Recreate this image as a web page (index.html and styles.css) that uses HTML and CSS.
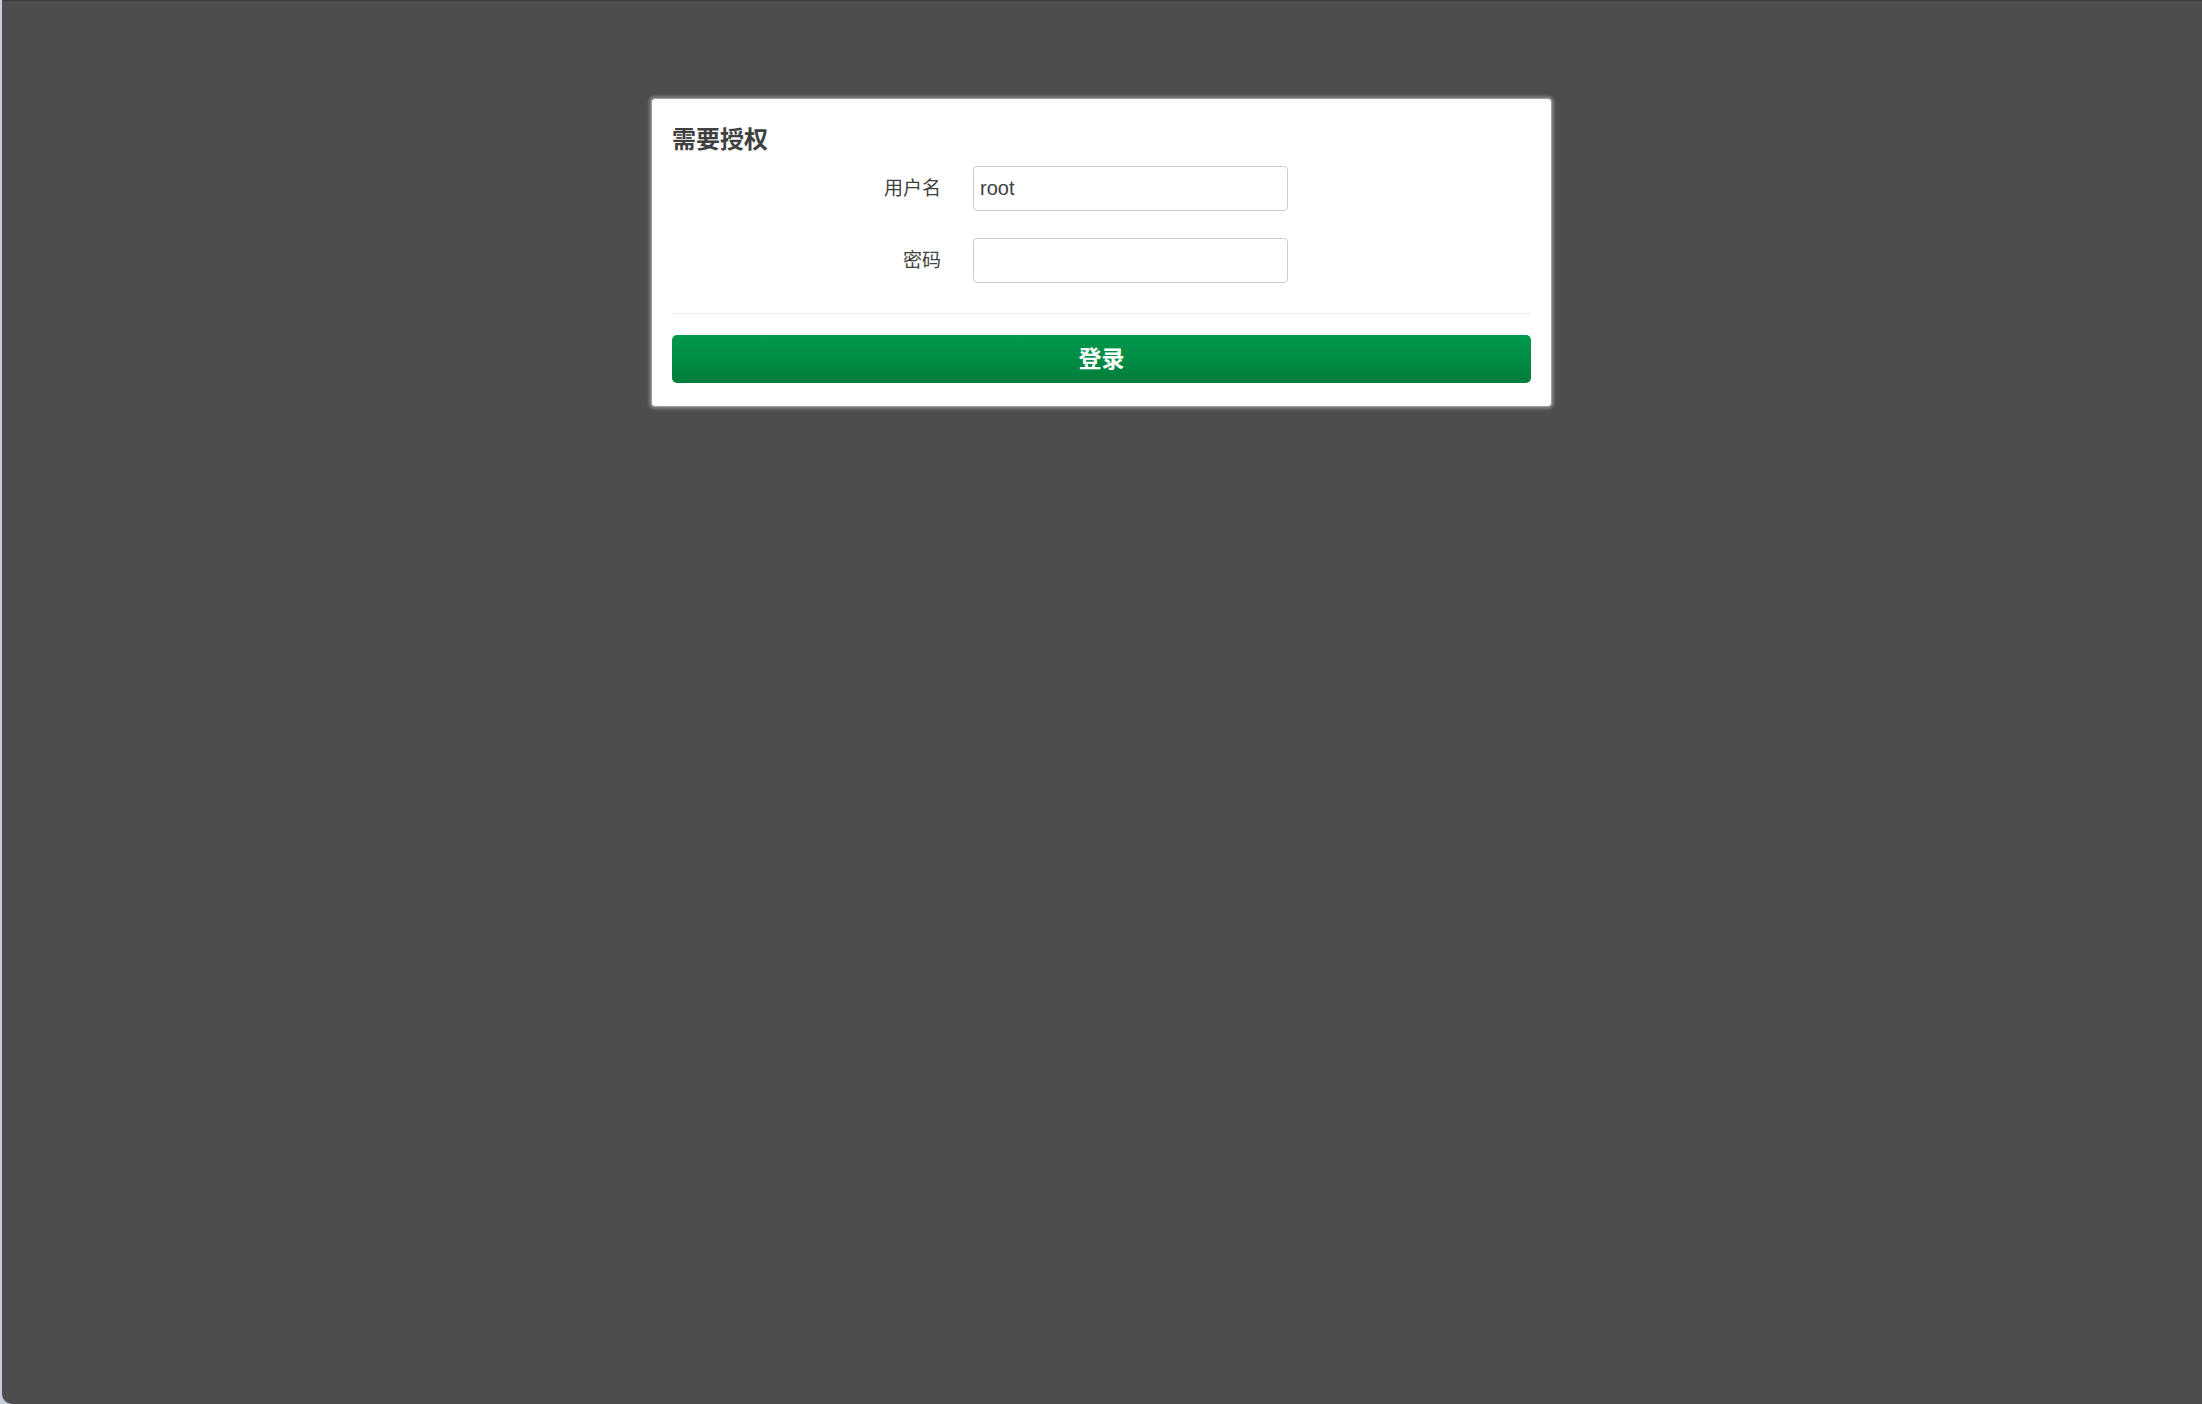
FILE: index.html
```html
<!DOCTYPE html>
<html lang="zh-CN">
<head>
<meta charset="utf-8">
<title>需要授权</title>
<link rel="stylesheet" href="styles.css">
</head>
<body>
<div class="page">
  <form class="card">
    <h2 class="title">需要授权</h2>
    <div class="fields">
      <div class="row">
        <label class="label" for="user">用户名</label>
        <input class="input" id="user" type="text" value="root">
      </div>
      <div class="row">
        <label class="label" for="pass">密码</label>
        <input class="input" id="pass" type="password" value="">
      </div>
    </div>
    <hr class="divider">
    <button class="btn" type="button">登录</button>
  </form>
</div>
</body>
</html>
```

FILE: styles.css
```css
html {
  margin: 0;
  padding: 0;
  background: #c6cedc;
  height: 100%;
}
body {
  margin: 0 0 0 2px;
  padding: 0;
  min-height: 100%;
  height: 100%;
  font-family: "Liberation Sans", "Noto Sans CJK SC", sans-serif;
  color: #404040;
}
.page {
  box-sizing: border-box;
  height: 100%;
  background: #4d4d4d;
  border-top: 1px solid #3c3c3c;
  border-bottom-left-radius: 10px;
  padding: 97px 1px 0 0;
  display: flex;
  flex-direction: column;
  align-items: center;
}
.card {
  box-sizing: border-box;
  width: 901px;
  background: #fff;
  border: 1px solid #9a9a9a;
  border-radius: 4px;
  box-shadow: 0 0 3px 2px rgba(170, 170, 170, 0.55);
  padding: 24px 20px 23px 20px;
  display: flex;
  flex-direction: column;
}
.title {
  margin: 0;
  font-family: "Noto Sans CJK SC", sans-serif;
  font-size: 24px;
  line-height: 30px;
  font-weight: 700;
  color: #404040;
}
.fields {
  margin-top: 13px;
  display: flex;
  flex-direction: column;
  gap: 27px;
}
.row {
  display: grid;
  grid-template-columns: 269px 315px;
  column-gap: 32px;
  align-items: center;
}
.label {
  text-align: right;
  font-family: "Noto Sans CJK SC", sans-serif;
  font-size: 19px;
  line-height: 24px;
  padding-bottom: 4px;
  color: #404040;
}
.input {
  box-sizing: border-box;
  height: 45px;
  width: 315px;
  border: 1px solid #cccccc;
  border-radius: 4px;
  padding: 0 6px;
  font-family: "Liberation Sans", Arial, sans-serif;
  font-size: 20px;
  color: #404040;
  background: #fff;
  outline: none;
}
.divider {
  margin: 30px 0 0 0;
  border: 0;
  border-top: 1px solid #ececec;
  height: 0;
}
.btn {
  margin-top: 21px;
  height: 48px;
  padding: 0 0 4px 0;
  border: 0;
  border-radius: 5px;
  background: linear-gradient(to bottom, #009a4d, #007d3a);
  color: #ffffff;
  font-family: "Noto Sans CJK SC", sans-serif;
  font-size: 23px;
  font-weight: 700;
  cursor: pointer;
}
```
